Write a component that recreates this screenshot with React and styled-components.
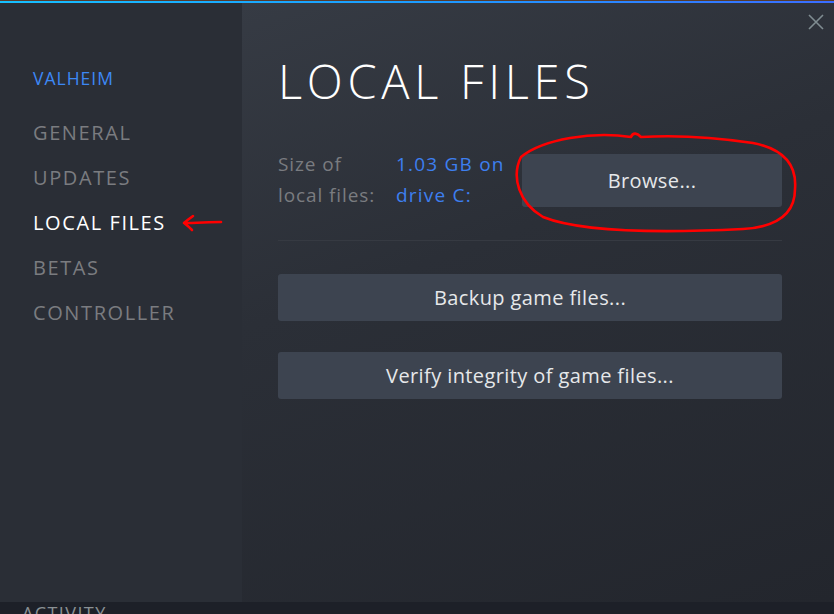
import React from "react";
import styled, { createGlobalStyle } from "styled-components";

const GlobalStyle = createGlobalStyle`
  html, body {
    margin: 0;
    padding: 0;
    background: #1d2027;
  }
  * { box-sizing: border-box; }
`;

const Page = styled.div`
  width: 834px;
  height: 614px;
  display: flex;
  flex-direction: column;
  overflow: hidden;
  font-family: "Open Sans", "Noto Sans", sans-serif;
`;

const TopStrip = styled.div`
  height: 3px;
  background: linear-gradient(90deg, #16c0ff 0%, #1c9cff 50%, #3b6dff 100%);
  border-top: 1px solid #5a3c2a;
`;

const Dialog = styled.div`
  flex: 1;
  display: flex;
  min-height: 0;
`;

const Sidebar = styled.nav`
  width: 242px;
  background: #2a2e36;
  padding: 63px 0 0 33px;
  display: flex;
  flex-direction: column;
`;

const GameTitle = styled.div`
  color: #3d88f5;
  font-size: 17.5px;
  letter-spacing: 1px;
  line-height: 24px;
  margin-bottom: 20px;
`;

const NavItem = styled.div`
  display: flex;
  align-items: center;
  gap: 16px;
  height: 45px;
  font-size: 20px;
  letter-spacing: 1.6px;
  color: ${(p) => (p.active ? "#ffffff" : "#7a7c80")};
`;

const Main = styled.main`
  flex: 1;
  position: relative;
  padding: 48px 52px 0 36px;
  background: linear-gradient(160deg, #363b44 0%, #2b2f37 40%, #23262d 100%);
`;

const Close = styled.div`
  position: absolute;
  top: 10px;
  right: 10px;
  width: 16px;
  height: 16px;
`;

const Heading = styled.h1`
  margin: 0 0 38px 0;
  font-size: 47px;
  font-weight: 300;
  letter-spacing: 4.7px;
  line-height: 60px;
  color: #ffffff;
`;

const InfoRow = styled.div`
  display: flex;
  align-items: center;
  padding-bottom: 29px;
  border-bottom: 1px solid #363a42;
`;

const InfoLabel = styled.div`
  width: 118px;
  font-size: 19px;
  letter-spacing: 0.9px;
  line-height: 31px;
  color: #7a7c80;
`;

const InfoValue = styled.div`
  width: 126px;
  font-size: 19px;
  letter-spacing: 1.2px;
  line-height: 31px;
  color: #3d7ff0;
`;

const BrowseWrap = styled.div`
  flex: 1;
  position: relative;
`;

const Button = styled.button`
  display: block;
  width: 100%;
  height: ${(p) => p.h || 47}px;
  border: none;
  border-radius: 3px;
  background: #3d4450;
  color: #e6e8ea;
  font-family: "Open Sans", "Noto Sans", sans-serif;
  font-size: 20px;
  letter-spacing: 0.4px;
  padding: 0;
  margin-top: ${(p) => p.mt || 0}px;
`;

const Circle = styled.svg`
  position: absolute;
  left: -9px;
  top: -25px;
  width: 286px;
  height: 106px;
  pointer-events: none;
`;

const BottomBar = styled.div`
  height: 12px;
  background: #1d2028;
  padding-left: 22px;
  overflow: hidden;
  color: #8a9094;
  font-size: 18px;
  line-height: 22px;
  letter-spacing: 1.4px;
`;

const navItems = ["GENERAL", "UPDATES", "LOCAL FILES", "BETAS", "CONTROLLER"];

function Arrow() {
  return (
    <svg width="42" height="18" viewBox="0 0 42 18">
      <path
        d="M11 2 C7 5 4 7 2 9 C5 11 8 14 10 16 M2 9 C14 9 28 8 39 8"
        fill="none"
        stroke="#ff0000"
        strokeWidth="2.6"
        strokeLinecap="round"
        strokeLinejoin="round"
      />
    </svg>
  );
}

export default function App() {
  return (
    <>
      <GlobalStyle />
      <Page>
        <TopStrip />
        <Dialog>
          <Sidebar>
            <GameTitle>VALHEIM</GameTitle>
            {navItems.map((n) => (
              <NavItem key={n} active={n === "LOCAL FILES"}>
                {n}
                {n === "LOCAL FILES" && <Arrow />}
              </NavItem>
            ))}
          </Sidebar>
          <Main>
            <Close>
              <svg width="16" height="16" viewBox="0 0 16 16">
                <path d="M1 1 L15 15 M15 1 L1 15" stroke="#7f8c91" strokeWidth="1.6" />
              </svg>
            </Close>
            <Heading>LOCAL FILES</Heading>
            <InfoRow>
              <InfoLabel>
                Size of
                <br />
                local files:
              </InfoLabel>
              <InfoValue>
                1.03 GB on
                <br />
                drive C:
              </InfoValue>
              <BrowseWrap>
                <Button h={53}>Browse...</Button>
                <Circle viewBox="0 0 286 106">
                  <path
                    d="M118 8 C80 2 30 10 8 28 C-2 48 6 74 30 88 C70 104 150 104 230 100 C262 98 282 86 282 60 C284 36 270 20 240 14 C200 8 160 6 128 8 C124 4 120 3 118 8"
                    fill="none"
                    stroke="#ff0000"
                    strokeWidth="2.6"
                    strokeLinecap="round"
                  />
                </Circle>
              </BrowseWrap>
            </InfoRow>
            <Button mt={33}>Backup game files...</Button>
            <Button mt={31}>Verify integrity of game files...</Button>
          </Main>
        </Dialog>
        <BottomBar>ACTIVITY</BottomBar>
      </Page>
    </>
  );
}
